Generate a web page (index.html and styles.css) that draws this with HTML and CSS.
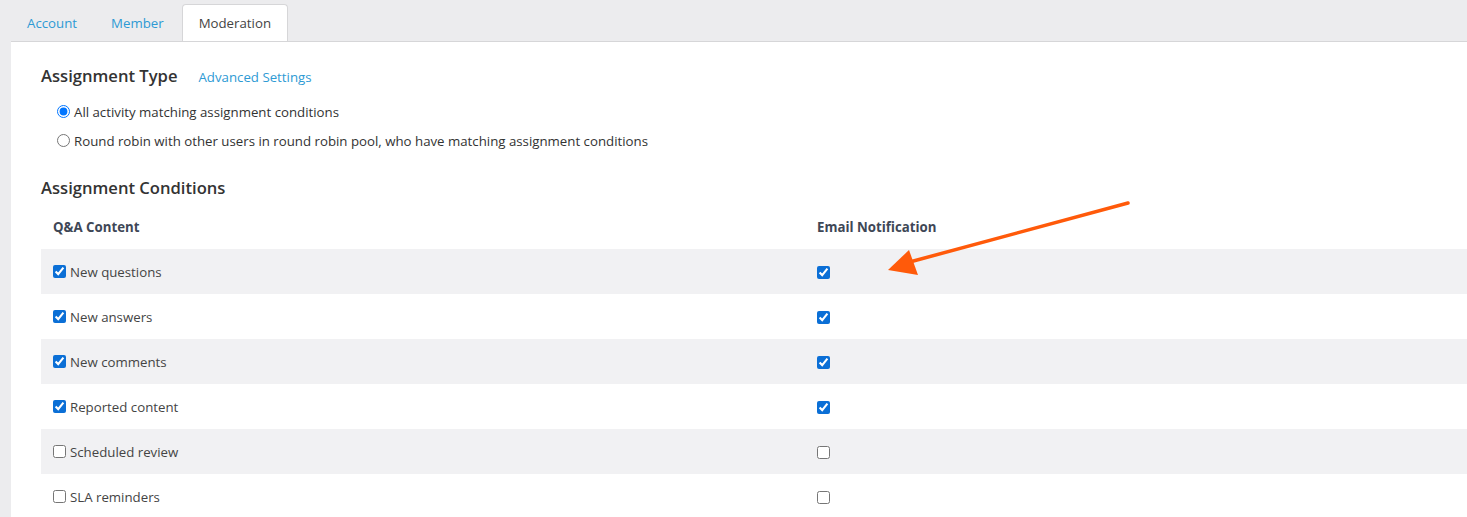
FILE: index.html
```html
<!DOCTYPE html>
<html lang="en">
<head>
  <meta charset="UTF-8" />
  <title>Moderation Settings</title>
  <link rel="stylesheet" href="styles.css">
</head>
<body>

  <!-- Tabs -->
  <ul class="tabs">
    <li><a href="#">Account</a></li>
    <li><a href="#">Member</a></li>
    <li class="active"><a href="#">Moderation</a></li>
  </ul>

  <!-- Panel -->
  <div class="panel">
    <div class="section-title">
      <h2>Assignment Type</h2>
      <a href="#">Advanced Settings</a>
    </div>

    <div class="radio-list">
      <label><input type="radio" name="atype" checked> All activity matching assignment conditions</label>
      <label><input type="radio" name="atype"> Round robin with other users in round robin pool, who have matching assignment conditions</label>
    </div>

    <h2 class="conditions-title">Assignment Conditions</h2>

    <table class="conditions">
      <thead>
        <tr>
          <th class="col-content">Q&amp;A Content</th>
          <th>Email Notification</th>
        </tr>
      </thead>
      <tbody>
        <tr>
          <td><label><input type="checkbox" checked>New questions</label></td>
          <td><input type="checkbox" checked></td>
        </tr>
        <tr>
          <td><label><input type="checkbox" checked>New answers</label></td>
          <td><input type="checkbox" checked></td>
        </tr>
        <tr>
          <td><label><input type="checkbox" checked>New comments</label></td>
          <td><input type="checkbox" checked></td>
        </tr>
        <tr>
          <td><label><input type="checkbox" checked>Reported content</label></td>
          <td><input type="checkbox" checked></td>
        </tr>
        <tr>
          <td><label><input type="checkbox">Scheduled review</label></td>
          <td><input type="checkbox"></td>
        </tr>
        <tr>
          <td><label><input type="checkbox">SLA reminders</label></td>
          <td><input type="checkbox"></td>
        </tr>
      </tbody>
    </table>
  </div>

  <!-- Annotation arrow -->
  <svg class="arrow" width="260" height="90" viewBox="0 0 260 90">
    <line x1="248" y1="12" x2="26" y2="72" stroke="#ff5a0a" stroke-width="3.5" stroke-linecap="round"/>
    <polygon points="8,79 29,59 38,84" fill="#ff5a0a"/>
  </svg>

</body>
</html>
```

FILE: styles.css
```css
body {
  font-family: "Open Sans", Arial, sans-serif;
  font-size: 13.25px;
  color: #333;
  background-color: #ececee;
  margin: 0;
}
a {
  color: #2e9ad4;
  text-decoration: none;
}
.tabs {
  list-style: none;
  margin: 0;
  padding: 4px 0 0 11px;
  display: flex;
  gap: 2px;
}
.tabs li a {
  display: block;
  padding: 9px 15px 9px;
  line-height: 18px;
  border: 1px solid transparent;
  border-bottom: none;
  border-radius: 4px 4px 0 0;
}
.tabs li.active a {
  background-color: white;
  color: #444;
  border-color: #d6d6d8;
  padding: 9px 16px;
  margin-bottom: -1px;
  position: relative;
}
.panel {
  background-color: white;
  margin-left: 11px;
  border-top: 1px solid #d6d6d8;
  padding: 22px 0 0 30px;
  height: 470px;
  overflow: hidden;
}
h2 {
  font-size: 16.6px;
  font-weight: 600;
  color: #333;
  margin: 0;
}
.section-title {
  display: flex;
  align-items: baseline;
  gap: 21px;
}
.radio-list {
  margin-top: 10px;
  padding-left: 15px;
}
.radio-list label {
  display: flex;
  align-items: center;
  height: 29px;
}
.radio-list input {
  margin: 0 4px 0 1px;
  width: 13px;
  height: 13px;
}
.conditions-title {
  margin-top: 21px;
}
.conditions {
  border-collapse: collapse;
  width: 100%;
  margin-top: 5px;
}
.conditions th {
  text-align: left;
  font-weight: bold;
  color: #3e4756;
  height: 45px;
  padding: 0 12px;
}
.conditions .col-content {
  width: 740px;
}
.conditions td {
  height: 45px;
  padding: 0 12px;
  color: #444;
}
.conditions tbody tr:nth-child(odd) {
  background-color: #f1f1f3;
}
.conditions label {
  display: flex;
  align-items: center;
}
.conditions input {
  margin: 0 4px 0 0;
  width: 13px;
  height: 13px;
  vertical-align: middle;
  accent-color: #0b6fd6;
}
.arrow {
  position: absolute;
  left: 880px;
  top: 191px;
}
```
